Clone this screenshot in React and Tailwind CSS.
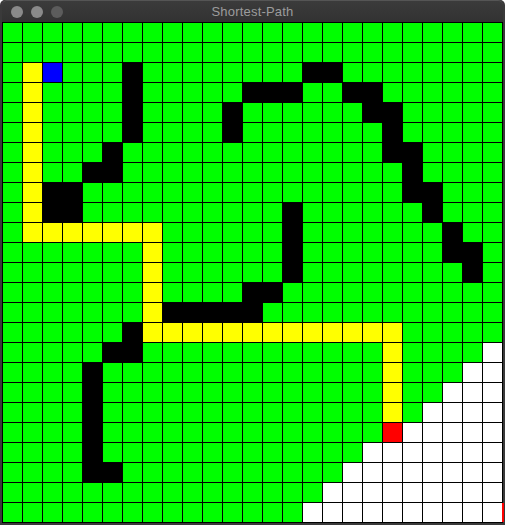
import React from 'react';

const COLS = 25;
const ROWS = 25;

// cells that are not plain green: row -> list of [color, [cols]]
const range = (a, b) => Array.from({ length: b - a + 1 }, (_, i) => a + i);

const overrides = {
  2: [['Y', [1]], ['B', [2]], ['K', [6, 15, 16]]],
  3: [['Y', [1]], ['K', [6, 12, 13, 14, 17, 18]]],
  4: [['Y', [1]], ['K', [6, 11, 18, 19]]],
  5: [['Y', [1]], ['K', [6, 11, 19]]],
  6: [['Y', [1]], ['K', [5, 19, 20]]],
  7: [['Y', [1]], ['K', [4, 5, 20]]],
  8: [['Y', [1]], ['K', [2, 3, 20, 21]]],
  9: [['Y', [1]], ['K', [2, 3, 14, 21]]],
  10: [['Y', range(1, 7)], ['K', [14, 22]]],
  11: [['Y', [7]], ['K', [14, 22, 23]]],
  12: [['Y', [7]], ['K', [14, 23]]],
  13: [['Y', [7]], ['K', [12, 13]]],
  14: [['Y', [7]], ['K', range(8, 12)]],
  15: [['K', [6]], ['Y', range(7, 19)]],
  16: [['K', [5, 6]], ['Y', [19]], ['W', [24]]],
  17: [['K', [4]], ['Y', [19]], ['W', [23, 24]]],
  18: [['K', [4]], ['Y', [19]], ['W', range(22, 24)]],
  19: [['K', [4]], ['Y', [19]], ['W', range(21, 24)]],
  20: [['K', [4]], ['R', [19]], ['W', range(20, 24)]],
  21: [['K', [4]], ['W', range(18, 24)]],
  22: [['K', [4, 5]], ['W', range(17, 24)]],
  23: [['W', range(16, 24)]],
  24: [['W', range(15, 24)]],
};

const buildGrid = () => {
  const grid = Array.from({ length: ROWS }, () => Array(COLS).fill('G'));
  Object.entries(overrides).forEach(([row, list]) => {
    list.forEach(([color, cols]) => {
      cols.forEach((c) => {
        grid[row][c] = color;
      });
    });
  });
  return grid;
};

const cellColors = {
  G: 'bg-[#00ff00]',
  Y: 'bg-[#ffff00]',
  B: 'bg-[#0000ff]',
  R: 'bg-[#ff0000]',
  K: 'bg-black',
  W: 'bg-white',
};

export default function App() {
  const grid = buildGrid();

  return (
    <div className="w-[507px] h-[525px] bg-white overflow-hidden">
      <div className="relative w-[505px] h-[525px] bg-[#2e2e2e] rounded-t-[5px] border-x-2 border-b-2 border-[#3a3a3a] flex flex-col">
        {/* Title bar */}
        <div className="h-[22px] shrink-0 flex items-center relative bg-gradient-to-b from-[#3b3b3b] to-[#323232] rounded-t-[5px] border-t border-[#555]">
          <div className="flex items-center gap-2 pl-[9px]">
            <span className="w-3 h-3 rounded-full bg-[#8a8a8a]" />
            <span className="w-3 h-3 rounded-full bg-[#8a8a8a]" />
            <span className="w-3 h-3 rounded-full bg-[#5c5c5c]" />
          </div>
          <div className="absolute inset-0 flex items-center justify-center text-[13px] text-[#9c9c9c] font-['Liberation_Sans',Arial,sans-serif] tracking-[0.2px]">
            Shortest-Path
          </div>
        </div>

        {/* Grid */}
        <div className="bg-black p-px grid grid-cols-[repeat(25,19px)] grid-rows-[repeat(25,19px)] gap-px">
          {grid.map((row, r) =>
            row.map((cell, c) => (
              <div key={`${r}-${c}`} className={cellColors[cell]} />
            ))
          )}
        </div>

        {/* end node peeking at the right edge */}
        <div className="absolute left-[500px] top-[503px] w-[2px] h-[19px] bg-[#ff0000]" />
      </div>
    </div>
  );
}
